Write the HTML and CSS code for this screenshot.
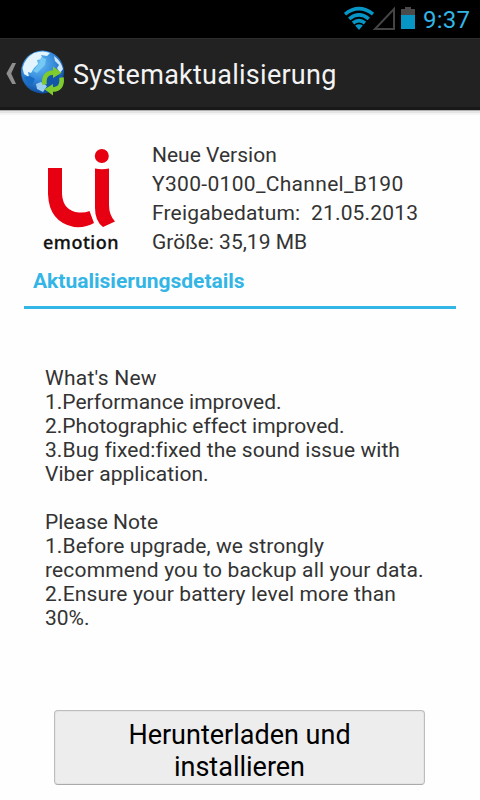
FILE: index.html
```html
<!DOCTYPE html>
<html lang="de">
<head>
<meta charset="utf-8">
<title>Systemaktualisierung</title>
<link rel="stylesheet" href="styles.css">
</head>
<body>
<div class="status">
  <svg class="status-icons" width="76" height="38" viewBox="0 0 76 38">
    <g fill="none" stroke="#0795c5" stroke-width="3.6">
      <path d="M1 14.2Q15 3.2 29 14.2"/>
      <path d="M5.2 18.8Q15 11 24.8 18.8"/>
      <path d="M9 23Q15 18.4 21 23"/>
    </g>
    <path d="M11.2 25.6Q15 23 18.8 25.6L15 30Z" fill="#0795c5"/>
    <path d="M31 29L50 9V29Z" fill="none" stroke="#444" stroke-width="2"/>
    <path d="M57 9H61V7H67V9H71V15H57Z" fill="#4a4a4a"/>
    <path d="M57 15H71V29H57Z" fill="#0795c5"/>
  </svg>
  <span class="clock">9:37</span>
</div>
<header class="bar">
  <svg class="back" width="14" height="24" viewBox="0 0 14 24"><path d="M8.2 1H12L7.2 11.5L12 22H8.2L2.4 11.5Z" fill="#8e8e8e"/></svg>
  <svg class="globe" width="46" height="46" viewBox="0 0 46 46">
    <defs>
      <radialGradient id="sea" cx=".4" cy=".3" r=".72">
        <stop offset="0" stop-color="#65bdf2"/><stop offset=".55" stop-color="#3488db"/><stop offset="1" stop-color="#0b4799"/>
      </radialGradient>
    </defs>
    <circle cx="21.5" cy="22" r="21.5" fill="url(#sea)"/>
    <path d="M1.5 18Q4 8 13 3Q22 0 29 3L26 6L20 5L22 9L16 10L17 14L13 18L10 23L7 22L8 27L3 24Z" fill="#e4f4fd"/>
    <path d="M20 7L25 9L24 15L20 19L16 23L12 21L18 14Z" fill="#76c9f3"/>
    <path d="M33 6Q40 11 42 19L39 23L36 18L38 15L34 11Z" fill="#cce8f8"/>
    <path d="M3 27L9 26L14 29L11 35L7 34Z" fill="#176cc5"/>
    <path d="M15 34L20 32L26 36L22 42L16 39Z" fill="#9ccff0"/>
    <circle cx="32" cy="31" r="8" fill="#1156a8"/>
    <g fill="none" stroke="#7fca2c" stroke-width="4.6">
      <path d="M23.5 34.5Q22 22.5 33 22.5"/>
      <path d="M40.5 27.5Q42 39.5 31 39.5"/>
    </g>
    <g fill="#7fca2c">
      <path d="M32 16.5L40.5 22.8L32 28Z"/>
      <path d="M32 45.5L23.5 39.2L32 34Z"/>
    </g>
  </svg>
  <h1 class="title">Systemaktualisierung</h1>
</header>
<main class="content">
  <section class="summary">
    <div class="brand">
      <svg width="76" height="82" viewBox="0 0 76 82">
        <g fill="#e60012">
          <circle cx="58.8" cy="8" r="7"/>
          <path d="M5 20H19V46Q20 63 36 64.500Q42 65 46.500 63L51 75Q43 80 31 79Q6 74 5 46Z"/>
          <path d="M52 20.500Q59 22 66 20.500V57Q66 67 72 73.500L60 79Q52 73 52 60Z"/>
        </g>
      </svg>
      <span class="brand-name">emotion</span>
    </div>
    <div class="info">
      <div>Neue Version</div>
      <div class="model">Y300-0100_Channel_B190</div>
      <div class="released">Freigabedatum:&nbsp; 21.05.2013</div>
      <div>Größe: 35,19 MB</div>
    </div>
  </section>
  <h2 class="tab">Aktualisierungsdetails</h2>
  <div class="notes">
    <div class="loose">What's New</div>
    <div>1.Performance improved.</div>
    <div>2.Photographic effect improved.</div>
    <div class="snug">3.Bug fixed:fixed the sound issue with</div>
    <div class="snug">Viber application.</div>
    <div>&nbsp;</div>
    <div>Please Note</div>
    <div class="snug">1.Before upgrade, we strongly</div>
    <div class="wide">recommend you to backup all your data.</div>
    <div class="wide">2.Ensure your battery level more than</div>
    <div>30%.</div>
  </div>
  <button class="install" type="button">Herunterladen und<br>installieren</button>
</main>
</body>
</html>
```
FILE: styles.css
```css
* { box-sizing: border-box; }
body {
  margin: 0;
  width: 480px;
  height: 800px;
  overflow: hidden;
  background: #fefefe;
  color: #333;
  font-family: Roboto, "Liberation Sans", sans-serif;
  font-size: 21px;
  font-variant-ligatures: common-ligatures;
}
.status {
  height: 38px;
  background: #000;
  display: flex;
  justify-content: flex-end;
  padding-right: 11px;
}
.status-icons { margin-right: 3px; }
.clock {
  color: #33b5e5;
  font-size: 24px;
  line-height: 40px;
  width: 46px;
  letter-spacing: 0.2px;
  white-space: nowrap;
}
.bar {
  height: 72px;
  background: #222;
  border-top: 1px solid #2d2d2d;
  border-bottom: 3px solid #181818;
  box-shadow: 0 1px 0 #b0b0b0, 0 3px 0 #e4e4e4, 0 5px 0 #f5f5f5;
  display: flex;
  align-items: center;
  padding-left: 4px;
}
.back { margin-right: 3px; margin-top: 2px; }
.globe { margin-top: 0; }
.title {
  margin: 4px 0 0 6px;
  color: #f3f3f3;
  font-size: 27px;
  font-weight: 400;
  letter-spacing: 0.26px;
  line-height: 32px;
  white-space: nowrap;
}
.content { padding: 30px 24px 0; }
.summary { display: flex; height: 120px; }
.brand {
  width: 128px;
  padding: 8px 0 0 19px;
}
.brand svg { display: block; }
.brand-name {
  display: block;
  color: #111;
  font-family: "Noto Sans", sans-serif;
  font-weight: 500;
  font-size: 18px;
  letter-spacing: 0.5px;
  line-height: 24px;
  -webkit-text-stroke: 0.3px #111;
}
.info { padding-top: 1px; line-height: 29px; white-space: nowrap; }
.model { letter-spacing: 0.32px; }
.released { letter-spacing: 0.17px; }
.tab {
  margin: 0;
  height: 49px;
  padding: 7px 9px 0;
  border-bottom: 3px solid #33b5e5;
  color: #33b5e5;
  font-size: 21px;
  font-weight: 700;
  line-height: 28px;
}
.notes {
  margin: 57px 0 0 21px;
  line-height: 24px;
  white-space: nowrap;
}
.loose { letter-spacing: 0.26px; }
.snug { letter-spacing: 0.07px; }
.wide { letter-spacing: 0.15px; }
.install {
  display: block;
  margin: 80px 0 0 30px;
  width: 371px;
  height: 75px;
  padding: 6px 0 0;
  border: 1px solid #bdbdbd;
  border-bottom-color: #aaa;
  border-radius: 4px;
  background: #ededed;
  box-shadow: inset 0 0 0 1px #e5e5e5;
  color: #000;
  font: 400 27px/32px Roboto, "Liberation Sans", sans-serif;
}
```
